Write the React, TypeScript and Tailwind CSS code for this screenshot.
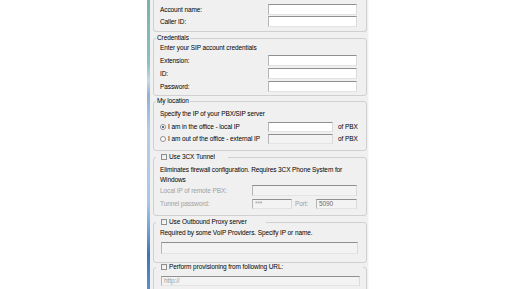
import React from "react";

const font = "font-['Tahoma','Liberation_Sans',sans-serif] text-[6.5px] tracking-[-0.1px] text-black";

function Box({ w, disabled, text, light }: { w: string; disabled?: boolean; text?: string; light?: boolean }) {
  return (
    <div
      className={`${w} h-full border border-t-[#8e8f8f] border-l-[#b5b5b5] border-r-[#dadada] border-b-[#e3e3e3] flex items-center pl-[2px] leading-none ${
        disabled ? "bg-[#f3f3f3]" : "bg-white"
      } ${light ? "text-[#a0a0a0]" : "text-[#6d6d6d]"}`}
    >
      {text}
    </div>
  );
}

function Check() {
  return <span className="w-[6px] h-[6px] border border-[#8f8f8f] bg-[linear-gradient(135deg,#e4e4e4,#ffffff)] shrink-0" />;
}

function Radio({ on }: { on?: boolean }) {
  return (
    <span className="w-[6px] h-[6px] rounded-full border border-[#8f8f8f] bg-white flex items-center justify-center shrink-0">
      {on && <span className="w-[2px] h-[2px] rounded-full bg-[#1b3b6b]" />}
    </span>
  );
}

function Group({ legend, mt, className, children }: { legend: React.ReactNode; mt: string; className?: string; children: React.ReactNode }) {
  return (
    <fieldset className={`${mt} border border-[#d0d0d0] rounded-[3px] px-0`}>
      <legend className="ml-[2px] px-[1px] leading-[8px] h-[8px]">{legend}</legend>
      <div className={`px-[6px] flex flex-col ${className ?? ""}`}>{children}</div>
    </fieldset>
  );
}

function CheckLegend({ w, label }: { w: string; label: string }) {
  return (
    <span className={`${w} flex items-center gap-[2px] pl-[4px]`}>
      <Check />
      <span>{label}</span>
    </span>
  );
}

export default function App() {
  return (
    <div className={`w-[516px] h-[289px] bg-white flex pl-[147px] overflow-hidden ${font}`}>
      <div className="w-[3px] h-full bg-[linear-gradient(to_bottom,#74b4aa_0%,#8cc0bd_22%,#c8d8e6_28%,#8fb0d6_33%,#b2cdea_45%,#a8c7e8_70%,#6e9fd2_80%,#3c75b5_88%,#5a8fcb_100%)]" />
      <div className="w-[219px] h-full bg-[#f0f0f0] border-r border-[#f8f8f8] flex flex-col pl-[3px] pr-[1px]">
        <div className="h-[32px] shrink-0 border border-t-0 border-[#d0d0d0] rounded-b-[3px] px-[6px] pt-[4px] pb-[4px] flex flex-col gap-[1px]">
          <div className="flex items-center h-[11px] pr-[3px]">
            <span className="flex-1">Account name:</span>
            <Box w="w-[89px]" />
          </div>
          <div className="flex items-center h-[11px] pr-[3px]">
            <span className="flex-1">Caller ID:</span>
            <Box w="w-[89px]" />
          </div>
        </div>

        <Group legend="Credentials" mt="mt-[2px]" className="pt-[2px] pb-[3px]">
          <div className="leading-[8px]">Enter your SIP account credentials</div>
          <div className="mt-[3px] flex flex-col gap-[2px] pr-[3px]">
            {["Extension:", "ID:", "Password:"].map((l) => (
              <div key={l} className="flex items-center h-[11px]">
                <span className="flex-1">{l}</span>
                <Box w="w-[89px]" />
              </div>
            ))}
          </div>
        </Group>

        <Group legend="My location" mt="mt-[1px]" className="pt-[5px] pb-[6px]">
          <div className="leading-[8px]">Specify the IP of your PBX/SIP server</div>
          <div className="mt-[4px] flex flex-col gap-[2px]">
            <div className="flex items-center h-[10px]">
              <Radio on />
              <span className="flex-1 ml-[2px] whitespace-nowrap">I am in the office - local IP</span>
              <Box w="w-[65px]" />
              <span className="w-[27px] pl-[5px] whitespace-nowrap">of PBX</span>
            </div>
            <div className="flex items-center h-[10px]">
              <Radio />
              <span className="flex-1 ml-[2px] whitespace-nowrap">I am out of the office - external IP</span>
              <Box w="w-[65px]" disabled />
              <span className="w-[27px] pl-[5px] whitespace-nowrap">of PBX</span>
            </div>
          </div>
        </Group>

        <Group legend={<CheckLegend w="w-[70px]" label="Use 3CX Tunnel" />} mt="mt-[2px]" className="pt-[4px] pb-[6px]">
          <div className="leading-[10px]">Eliminates firewall configuration. Requires 3CX Phone System for Windows</div>
          <div className="flex flex-col gap-[3px] pr-[3px] text-[#a0a0a0]">
            <div className="flex items-center h-[11px]">
              <span className="flex-1">Local IP of remote PBX:</span>
              <Box w="w-[105px]" disabled />
            </div>
            <div className="flex items-center h-[10px]">
              <span className="flex-1">Tunnel password:</span>
              <Box w="w-[40px]" disabled light text="***" />
              <span className="w-[24px] pl-[3px]">Port:</span>
              <Box w="w-[41px]" disabled text="5090" />
            </div>
          </div>
        </Group>

        <Group legend={<CheckLegend w="w-[108px]" label="Use Outbound Proxy server" />} mt="mt-[2px]" className="pt-[3px] pb-[8px]">
          <div className="leading-[8px]">Required by some VoIP Providers. Specify IP or name.</div>
          <div className="mt-[5px] h-[12px] pl-[1px] pr-[2px] flex">
            <Box w="w-full" disabled />
          </div>
        </Group>

        <Group legend={<CheckLegend w="w-[205px]" label="Perform provisioning from following URL:" />} mt="mt-0" className="pt-[5px] pb-[6px]">
          <div className="h-[10px] pl-[1px] flex">
            <Box w="w-full" disabled text="http://" light />
          </div>
        </Group>
      </div>
    </div>
  );
}
